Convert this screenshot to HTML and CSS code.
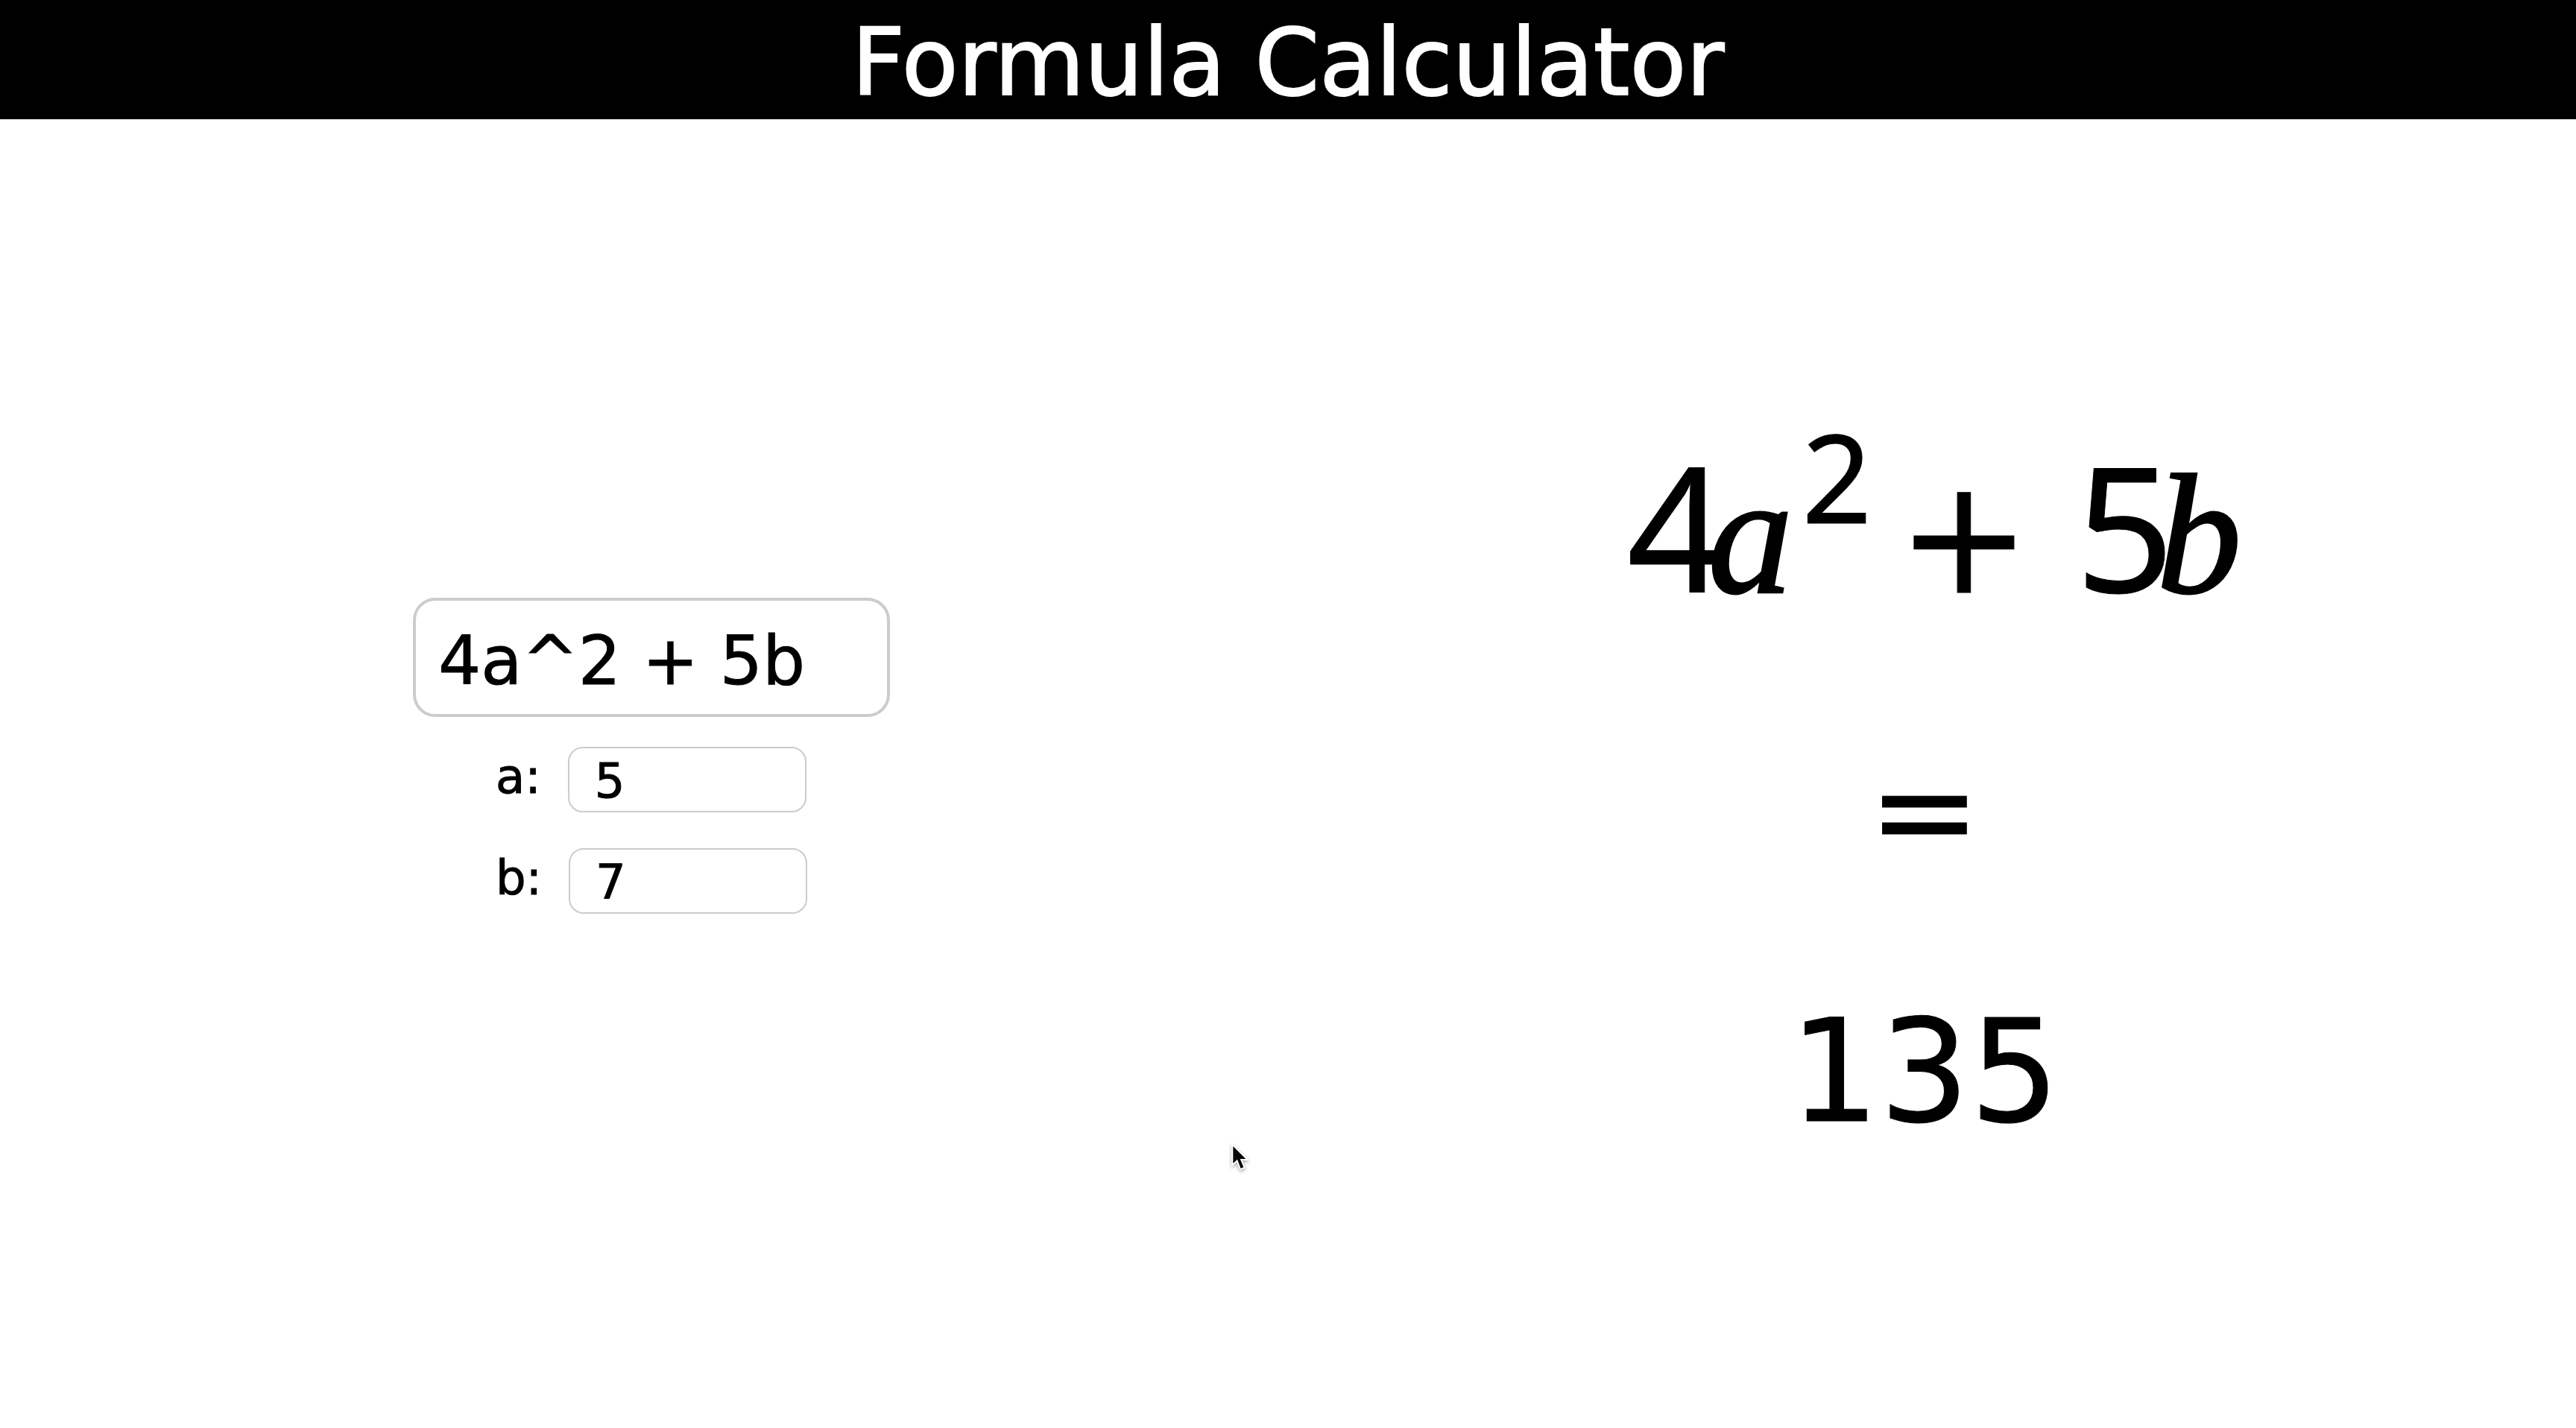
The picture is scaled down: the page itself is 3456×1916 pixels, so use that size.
FILE: index.html
```html
<!DOCTYPE html>
<html lang="en">
<head>
  <meta charset="utf-8">
  <title>Formula Calculator</title>
  <link rel="stylesheet" href="styles.css">
</head>
<body>
  <header class="header">
    <h1 class="title">Formula Calculator</h1>
  </header>
  <main class="main">
    <form class="panel">
      <input class="formula-input" type="text" value="4a^2 + 5b" aria-label="Formula">
      <div class="variables">
        <div class="variable">
          <label class="variable-label" for="var-a">a:</label>
          <input class="variable-input" id="var-a" type="text" value="5">
        </div>
        <div class="variable">
          <label class="variable-label" for="var-b">b:</label>
          <input class="variable-input" id="var-b" type="text" value="7">
        </div>
      </div>
    </form>
    <section class="panel panel-result">
      <div class="formula"><span class="num">4</span><span class="var">a</span><sup class="power">2</sup><span class="operator">+</span><span class="num">5</span><span class="var">b</span></div>
      <div class="equals">=</div>
      <output class="result">135</output>
    </section>
  </main>
  <svg class="cursor" viewBox="0 0 240 240" aria-hidden="true">
    <path d="M73 84V153L90 137L104 173L115 168L101 135H124Z" fill="#000" stroke="#fff" stroke-width="12" stroke-linejoin="miter" paint-order="stroke"/>
  </svg>
</body>
</html>
```
FILE: styles.css
```css
* {
  box-sizing: border-box;
}

body {
  margin: 0;
  min-height: 100vh;
  display: flex;
  flex-direction: column;
  background: #fff;
  color: #000;
  font-family: "DejaVu Sans", sans-serif;
  -webkit-text-stroke: 1px currentColor;
}

.header {
  padding-top: 8px;
  background: #000;
  color: #fff;
  text-align: center;
}

.title {
  margin: 0;
  font-size: 124px;
  font-weight: 400;
  line-height: 152px;
  -webkit-text-stroke: 2px currentColor;
}

.main {
  flex: 1;
  display: grid;
  grid-template-columns: 1fr 1fr;
  padding: 0 20px;
}

.panel {
  display: flex;
  flex-direction: column;
  align-items: center;
  justify-content: center;
  gap: 40px;
}

.panel-result {
  gap: 134px;
}

.formula-input,
.variable-input {
  border-style: solid;
  border-color: #ccc;
  background: #fff;
  color: inherit;
  font-family: inherit;
}

.formula-input {
  width: 640px;
  height: 160px;
  padding: 8px 30px 0;
  border-width: 4px;
  border-radius: 30px;
  font-size: 90px;
}

.variable {
  display: flex;
  align-items: center;
  gap: 36px;
  margin-bottom: 48px;
}

.variable-label {
  padding-bottom: 8px;
  font-size: 64px;
  line-height: 80px;
}

.variable-input {
  width: 320px;
  height: 88px;
  padding: 4px 34px 0;
  border-width: 2px;
  border-radius: 20px;
  font-size: 64px;
}

.formula {
  padding: 36px 0 0 26px;
  font-family: "Noto Sans", sans-serif;
  font-size: 232px;
  line-height: 288px;
  white-space: nowrap;
}

.num,
.var,
.power,
.operator {
  line-height: 0;
}

.var {
  margin-left: -24px;
  font-family: "Liberation Serif", serif;
  font-size: 228px;
  font-style: italic;
  -webkit-text-stroke: 3px currentColor;
}

.power {
  margin-left: 12px;
  font-size: 164px;
  vertical-align: 93px;
}

.operator {
  margin: 0 60px 0 34px;
  font-family: "DejaVu Sans", sans-serif;
  font-size: 214px;
}

.equals {
  font-size: 180px;
  line-height: 210px;
}

.result {
  font-size: 190px;
  line-height: 224px;
}

.cursor {
  position: absolute;
  top: 1510px;
  left: 1630px;
  width: 80px;
  height: 80px;
  filter: drop-shadow(0 2px 2px rgba(0, 0, 0, 0.35));
}
```
